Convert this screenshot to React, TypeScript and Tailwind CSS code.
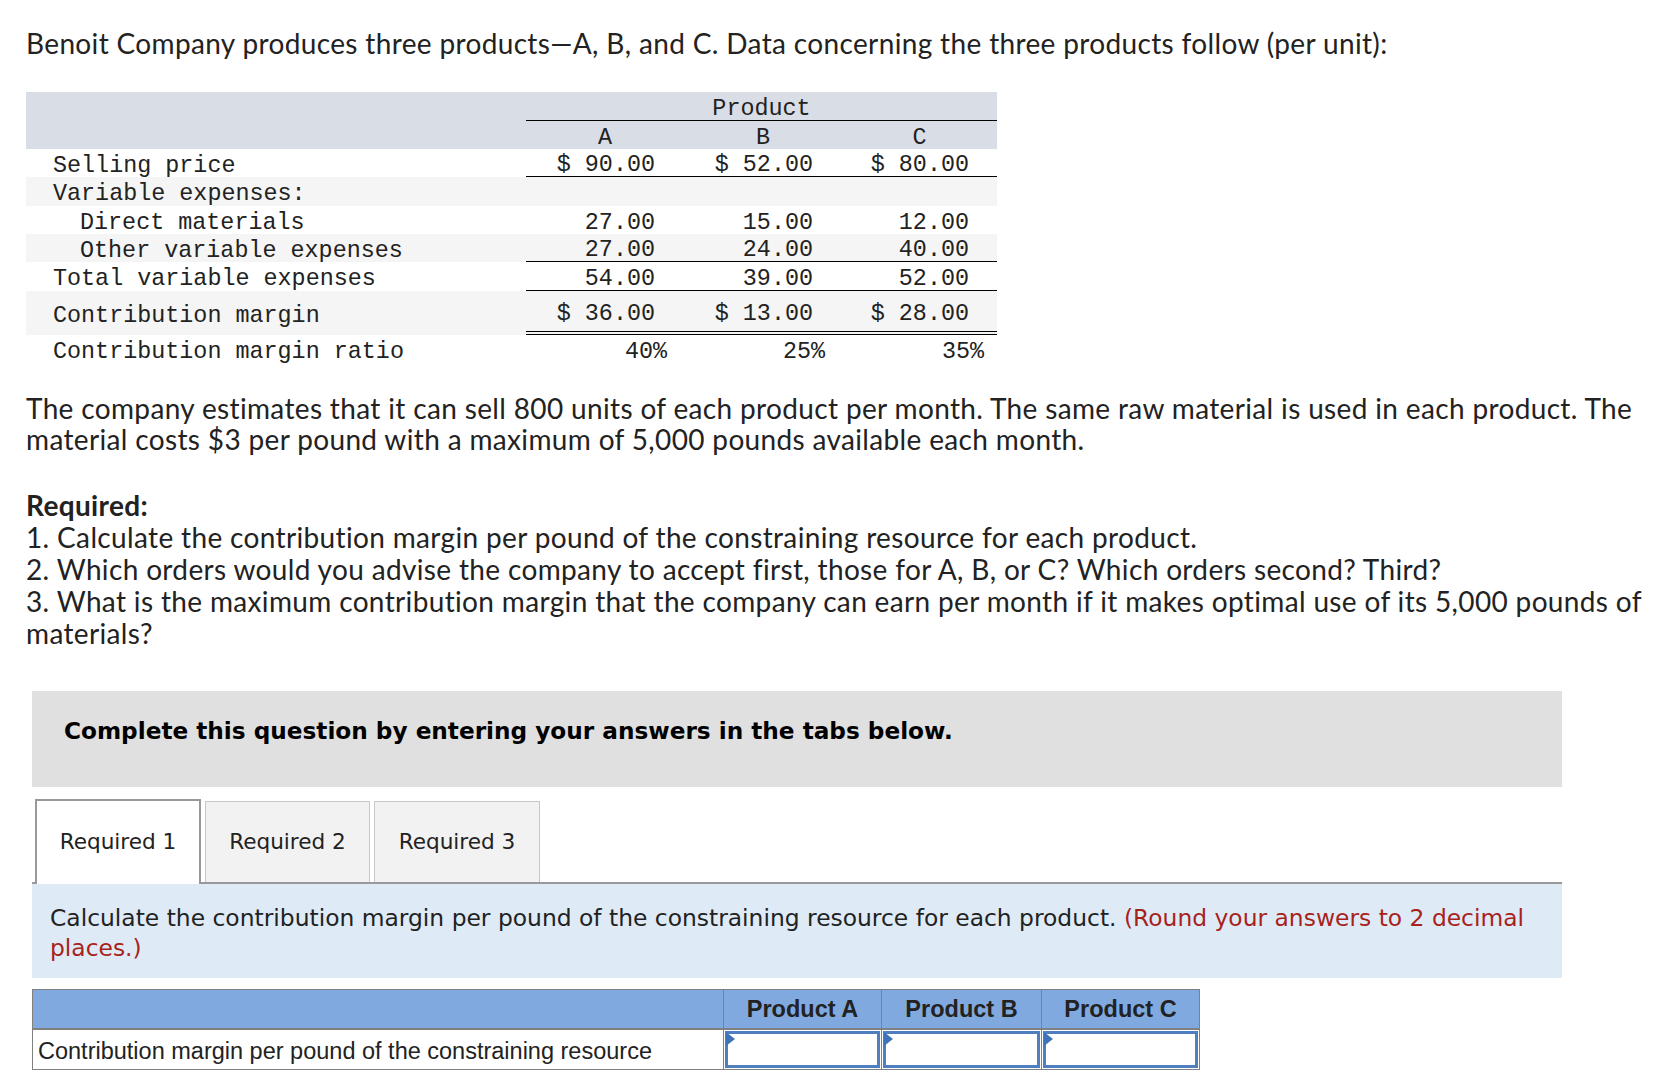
import React from "react";

const mono = { fontFamily: '"Liberation Mono", "Courier New", monospace' };
const sans = { fontFamily: '"Lato", "Open Sans", sans-serif' };
const verdana = { fontFamily: '"DejaVu Sans", Verdana, sans-serif' };

export default function App() {
  const rows: {
    label: string;
    indent?: boolean;
    vals: string[];
    bg: string;
    h: string;
    line?: string;
    pct?: boolean;
  }[] = [
    { label: "Selling price", vals: ["$ 90.00", "$ 52.00", "$ 80.00"], bg: "bg-white", h: "h-[28px]", line: "border-b border-black" },
    { label: "Variable expenses:", vals: ["", "", ""], bg: "bg-[#f5f5f5]", h: "h-[29px]" },
    { label: "Direct materials", indent: true, vals: ["27.00", "15.00", "12.00"], bg: "bg-white", h: "h-[28px]" },
    { label: "Other variable expenses", indent: true, vals: ["27.00", "24.00", "40.00"], bg: "bg-[#f5f5f5]", h: "h-[28px]", line: "border-b border-black" },
    { label: "Total variable expenses", vals: ["54.00", "39.00", "52.00"], bg: "bg-white", h: "h-[29px]", line: "border-b border-black" },
    { label: "Contribution margin", vals: ["$ 36.00", "$ 13.00", "$ 28.00"], bg: "bg-[#f5f5f5]", h: "h-[44px]", line: "border-b-[4px] border-double border-black" },
    { label: "Contribution margin ratio", vals: ["40%", "25%", "35%"], bg: "bg-white", h: "h-[28px]", pct: true },
  ];
  const widths = ["w-[158px]", "w-[158px]", "w-[155px]"];

  return (
    <div className="w-[1656px] min-h-[1082px] bg-white text-[#222]">
      <div className="pl-[26px] pt-[27px]" style={sans}>
        <p className="text-[28px] leading-[32px] tracking-[0.35px] whitespace-nowrap">
          Benoit Company produces three products—A, B, and C. Data concerning the three products follow (per unit):
        </p>
      </div>

      {/* Data table */}
      <div className="ml-[26px] mt-[33px] w-[971px] text-[23.4px] leading-[24px] text-[#222]" style={mono}>
        <div className="bg-[#d9dde5] flex h-[57px]">
          <div className="w-[500px]" />
          <div className="w-[471px] flex flex-col">
            <div className="h-[29px] flex items-center justify-center border-b border-black pt-[5px]">
              <span>Product</span>
            </div>
            <div className="h-[28px] flex">
              <div className="w-[158px] flex items-center justify-center pt-[5px]">A</div>
              <div className="w-[158px] flex items-center justify-center pt-[5px]">B</div>
              <div className="w-[155px] flex items-center justify-center pt-[5px]">C</div>
            </div>
          </div>
        </div>
        {rows.map((r, i) => (
          <div key={i} className={`flex ${r.bg} ${r.h}`}>
            <div className={`w-[500px] flex items-center whitespace-pre pt-[5px] ${r.indent ? "pl-[54px]" : "pl-[27px]"}`}>
              {r.label}
            </div>
            {r.vals.map((v, j) => (
              <div
                key={j}
                className={`${widths[j]} flex items-center justify-end whitespace-pre pt-[5px] ${r.line ?? ""} ${
                  r.pct ? (j === 2 ? "pr-[13px]" : "pr-[17px]") : j === 2 ? "pr-[28px]" : "pr-[29px]"
                }`}
              >
                {v}
              </div>
            ))}
          </div>
        ))}
      </div>

      {/* Paragraphs */}
      <div className="pl-[26px] text-[28px] leading-[31px] tracking-[0.35px]" style={sans}>
        <div className="mt-[30px]">
          <p className="whitespace-nowrap">
            The company estimates that it can sell 800 units of each product per month. The same raw material is used in each product. The
          </p>
          <p className="whitespace-nowrap">material costs $3 per pound with a maximum of 5,000 pounds available each month.</p>
        </div>
        <div className="mt-[34px] leading-[32px]">
          <p className="font-bold">Required:</p>
          <p className="whitespace-nowrap">1. Calculate the contribution margin per pound of the constraining resource for each product.</p>
          <p className="whitespace-nowrap">
            2. Which orders would you advise the company to accept first, those for A, B, or C? Which orders second? Third?
          </p>
          <p className="whitespace-nowrap">
            3. What is the maximum contribution margin that the company can earn per month if it makes optimal use of its 5,000 pounds of
          </p>
          <p>materials?</p>
        </div>
      </div>

      {/* Gray instruction box */}
      <div className="ml-[32px] mt-[42px] w-[1530px] h-[96px] bg-[#e0e0e0] pl-[32px] pt-[26px]">
        <p className="text-[23.2px] font-bold text-black leading-[28px]" style={verdana}>
          Complete this question by entering your answers in the tabs below.
        </p>
      </div>

      {/* Tabs */}
      <div className="ml-[32px] mt-[14px] w-[1530px]" style={verdana}>
        <div className="flex items-end h-[83px] border-b-2 border-[#999]">
          <div className="ml-[3px] w-[166px] h-[85px] -mb-[2px] bg-white border-2 border-b-0 border-[#999] flex items-center justify-center text-[21.6px] text-[#222]">
            Required 1
          </div>
          <div className="ml-[4px] w-[165px] h-[81px] bg-[#f2f2f2] border border-b-0 border-[#c8c8c8] flex items-center justify-center text-[21.6px] text-[#222]">
            Required 2
          </div>
          <div className="ml-[4px] w-[166px] h-[81px] bg-[#f2f2f2] border border-b-0 border-[#c8c8c8] flex items-center justify-center text-[21.6px] text-[#222]">
            Required 3
          </div>
        </div>
        <div className="bg-[#deebf7] h-[94px] pl-[18px] pr-[20px] pt-[19px] text-[23.4px] leading-[30px] text-[#222]">
          <p className="whitespace-nowrap">
            Calculate the contribution margin per pound of the constraining resource for each product.{" "}
            <span className="text-[#a8221c]">(Round your answers to 2 decimal</span>
          </p>
          <p className="text-[#a8221c]">places.)</p>
        </div>
      </div>

      {/* Answer table */}
      <div
        className="ml-[32px] mt-[11px] w-[1168px] border border-[#808080] text-[23.5px] leading-[26px] text-[#222]"
        style={{ fontFamily: '"Liberation Sans", Arial, sans-serif' }}
      >
        <div className="flex h-[40px] bg-[#80aadf] border-b-2 border-[#808080]">
          <div className="w-[690px]" />
          <div className="w-[158px] flex items-center justify-center font-bold border-l border-[#808080]">Product A</div>
          <div className="w-[160px] flex items-center justify-center font-bold border-l border-[#808080]">Product B</div>
          <div className="w-[158px] flex items-center justify-center font-bold border-l border-[#808080]">Product C</div>
        </div>
        <div className="flex h-[39px] bg-white">
          <div className="w-[690px] flex items-center pl-[5px] pt-[2px] whitespace-nowrap">
            Contribution margin per pound of the constraining resource
          </div>
          {["w-[158px]", "w-[160px]", "w-[158px]"].map((w, k) => (
            <div key={k} className={`${w} border-l border-[#808080] p-[1px]`}>
              <div className="relative h-full border-[3px] border-[#4f7fbf] bg-white">
                <svg className="absolute left-[-2px] top-[-2px]" width="10" height="14" viewBox="0 0 10 14">
                  <polygon points="0,0 9,7 0,14" fill="#3f73b8" />
                </svg>
              </div>
            </div>
          ))}
        </div>
      </div>
    </div>
  );
}
